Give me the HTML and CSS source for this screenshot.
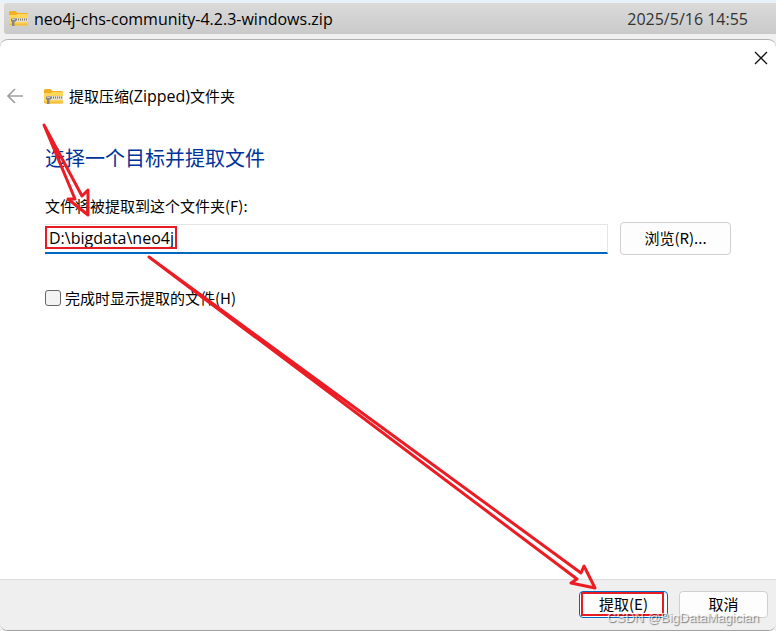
FILE: index.html
```html
<!DOCTYPE html>
<html lang="zh-CN">

<head>
    <meta charset="UTF-8">
    <meta name="viewport" content="width=device-width, initial-scale=1.0">
    <title>提取压缩(Zipped)文件夹</title>
    <link rel="stylesheet" href="styles.css">
</head>

<body>
    <svg class="defs" aria-hidden="true">
        <symbol id="zip" viewBox="0 0 19 15">
            <path d="M0 1.5Q0 0 1.5 0H6.5L8.5 2H17.5Q19 2 19 3.5V8H0Z" fill="#f0b020" />
            <path d="M0 4H7L9 3H18Q19 3 19 4V13Q19 14.500 17.500 14.500H1.500Q0 14.500 0 13Z" fill="#ffd65c" />
            <path d="M0 12.500H19V13Q19 14.500 17.500 14.500H1.500Q0 14.500 0 13Z" fill="#f3bc3b" />
            <path d="M3 9H19" stroke="#e4dfcc" stroke-width="4" />
            <path d="M5 8.500H19" stroke="#817a69" stroke-width="2" stroke-dasharray="1 1" />
            <path d="M2 7.500H7V10.500H5.500V15H3V10.500H2Z" fill="#858585" />
            <path d="M3 8.500H6" stroke="#d0d0d0" />
        </symbol>
    </svg>

    <div class="file-row">
        <svg class="zip-icon" aria-hidden="true"><use href="#zip" /></svg>
        <span class="file-name">neo4j-chs-community-4.2.3-windows.zip</span>
        <time class="file-date">2025/5/16 14:55</time>
    </div>

    <main class="dialog">
        <div class="title-bar">
            <button class="icon-button" type="button" aria-label="关闭">
                <svg width="14" height="14" viewBox="0 0 14 14"><path d="M1 1L13 13M13 1L1 13" stroke="#111" stroke-width="1.300" /></svg>
            </button>
        </div>

        <header class="wizard-header">
            <button class="icon-button back" type="button" aria-label="返回">
                <svg width="16" height="16" viewBox="0 0 16 16" fill="none"><path d="M8 1L1 8L8 15M1 8H16" stroke="#a0a0a0" stroke-width="1.700" /></svg>
            </button>
            <svg class="zip-icon" aria-hidden="true"><use href="#zip" /></svg>
            <div class="wizard-title">提取压缩<span class="latin">(Zipped)</span>文件夹</div>
        </header>

        <section class="content">
            <h1>选择一个目标并提取文件</h1>
            <label class="path-label" for="path">文件将被提取到这个文件夹(F):</label>
            <div class="path-row">
                <div class="path-field">
                    <input class="path-input" id="path" type="text" value="D:\bigdata\neo4j">
                    <span class="mark mark-path"></span>
                </div>
                <button class="button browse" type="button">浏览(R)...</button>
            </div>
            <label class="check">
                <input type="checkbox">
                <span>完成时显示提取的文件(H)</span>
            </label>
        </section>

        <footer class="actions">
            <button class="button primary" type="button">提取(E)<span class="mark mark-extract"></span></button>
            <button class="button" type="button">取消</button>
            <span class="watermark">CSDN @BigDataMagician</span>
        </footer>
    </main>

    <svg class="arrows" viewBox="0 0 776 631" aria-hidden="true">
        <path d="M44 125L75 199L68 199L88 215L88 190L82 196Z" />
        <path d="M149 257L577 579L571 583L595 588L584 566L581 573Z" />
    </svg>
</body>

</html>
```
FILE: styles.css
```css
* {
    box-sizing: border-box;
}

body {
    position: relative;
    display: flex;
    flex-direction: column;
    min-height: 100vh;
    margin: 0;
    border-top: 2px solid #e5f1fb;
    background-color: #f0f0f0;
    color: #000;
    font-family: "Noto Sans CJK SC", sans-serif;
    font-size: 15px;
    line-height: 20px;
}

button,
input {
    font: inherit;
    color: inherit;
}

.defs {
    position: absolute;
    width: 0;
    height: 0;
}

.zip-icon {
    flex: none;
    width: 19px;
    height: 15px;
}

.file-row,
.latin,
.path-input {
    font-family: "Open Sans", sans-serif;
    font-size: 16px;
}

.file-row {
    display: flex;
    align-items: center;
    height: 31px;
    margin: 1px 0 5px 4px;
    padding: 0 28px 0 5px;
    border-radius: 3px 0 0 3px;
    background: linear-gradient(#dadada, #cacaca);
}

.file-name {
    margin-left: 6px;
}

.file-date {
    margin-left: auto;
    color: #333;
}

.dialog {
    display: flex;
    flex: 1;
    flex-direction: column;
    overflow: hidden;
    border-top: 1px solid #b0b0b0;
    border-bottom: 1px solid #a0a0a0;
    border-radius: 8px;
    background-color: #fff;
}

.title-bar {
    display: flex;
    justify-content: flex-end;
    padding: 11px 8px 0 0;
}

.icon-button {
    display: flex;
    padding: 0;
    border: 0;
    background: none;
}

.wizard-header {
    display: flex;
    align-items: center;
    height: 20px;
    margin-top: 21px;
    padding-left: 7px;
}

.back {
    margin-right: 21px;
}

.wizard-title {
    margin-left: 6px;
}

.content {
    flex: 1;
    padding: 0 45px;
}

h1 {
    margin: 38px 0 24px;
    color: #003399;
    font-size: 20px;
    font-weight: 400;
    line-height: 28px;
}

.path-label {
    display: block;
}

.path-row {
    display: flex;
    gap: 12px;
    margin-top: 6px;
}

.path-field {
    position: relative;
    flex: 1;
    padding-top: 2px;
}

.path-input {
    display: block;
    width: 100%;
    height: 30px;
    padding: 0 4px 2px;
    border: 1px solid #e5e5e5;
    border-bottom: 2px solid #0067c0;
    border-left: 0;
    outline: 0;
    background-color: #fff;
}

.button {
    position: relative;
    width: 89px;
    height: 27px;
    padding: 0 0 2px;
    border: 1px solid #d0d0d0;
    border-radius: 4px;
    background-color: #fdfdfd;
    line-height: 20px;
}

.browse {
    width: 111px;
    height: 33px;
}

.primary {
    border-color: #0067c0;
}

.mark {
    position: absolute;
    border: 2px solid #e71b24;
}

.mark-path {
    top: 4px;
    left: 0;
    width: 132px;
    height: 23px;
}

.mark-extract {
    top: 0;
    left: 1px;
    width: 83px;
    height: 24px;
}

.check {
    display: flex;
    align-items: center;
    gap: 4px;
    margin-top: 33px;
}

.check input {
    appearance: none;
    width: 16px;
    height: 16px;
    margin: 0;
    border: 1px solid #666;
    border-radius: 3px;
    background-color: #f3f3f3;
}

.actions {
    position: relative;
    display: flex;
    justify-content: flex-end;
    gap: 11px;
    padding: 11px 8px 12px;
    border-top: 1px solid #dcdcdc;
    background-color: #efefef;
}

.watermark {
    position: absolute;
    right: 17px;
    bottom: 2px;
    color: rgba(255, 255, 255, 0.7);
    font-family: "Liberation Sans", sans-serif;
    font-size: 13px;
    text-shadow: 1px 1px 1px rgba(0, 0, 0, 0.5);
}

/* hand-drawn pointers over the dialog */
.arrows {
    position: absolute;
    top: -2px;
    left: 0;
    width: 776px;
    height: 631px;
    fill: none;
    stroke: #ec1c24;
    stroke-width: 3;
    stroke-linejoin: round;
    pointer-events: none;
}
```
